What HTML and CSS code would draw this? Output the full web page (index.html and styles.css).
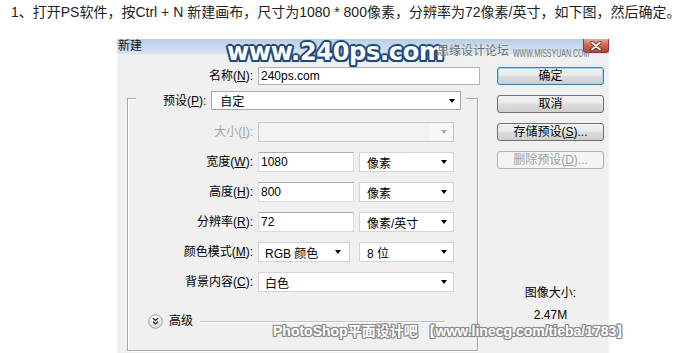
FILE: index.html
```html
<!DOCTYPE html>
<html lang="zh-CN">
<head>
<meta charset="utf-8">
<title>新建</title>
<link rel="stylesheet" href="styles.css">
</head>
<body>
<p class="intro">1、打开PS软件，按Ctrl + N 新建画布，尺寸为1080 * 800像素，分辨率为72像素/英寸，如下图，然后确定。</p>
<div class="stage">
  <div class="dialog">
    <div class="titlebar">
      <span class="title">新建</span>
      <span class="close"><svg width="14" height="10" viewBox="0 0 14 10"><path d="M3 1.5l8 7M11 1.5l-8 7" stroke="#5a1f1a" stroke-width="3.2" stroke-linecap="round"/><path d="M3 1.5l8 7M11 1.5l-8 7" stroke="#fff" stroke-width="1.8" stroke-linecap="round"/></svg></span>
    </div>
    <div class="body">
      <div class="main">
        <div class="name-row">
          <span class="lbl">名称(<u>N</u>):</span>
          <span class="input name">240ps.com</span>
        </div>
        <div class="group">
          <div class="group-head">
            <span class="lbl">预设(<u>P</u>):</span>
            <span class="select preset">自定</span>
          </div>
          <div class="grid-row first">
            <span class="lbl disabled">大小(<u>I</u>):</span>
            <span class="select span2 off"></span>
          </div>
          <div class="grid-row">
            <span class="lbl">宽度(<u>W</u>):</span>
            <span class="input">1080</span>
            <span class="select">像素</span>
          </div>
          <div class="grid-row">
            <span class="lbl">高度(<u>H</u>):</span>
            <span class="input">800</span>
            <span class="select">像素</span>
          </div>
          <div class="grid-row">
            <span class="lbl">分辨率(<u>R</u>):</span>
            <span class="input">72</span>
            <span class="select">像素/英寸</span>
          </div>
          <div class="grid-row">
            <span class="lbl">颜色模式(<u>M</u>):</span>
            <span class="select mode">RGB 颜色</span>
            <span class="select">8 位</span>
          </div>
          <div class="grid-row">
            <span class="lbl">背景内容(<u>C</u>):</span>
            <span class="select span2">白色</span>
          </div>
          <div class="advanced">
            <svg width="15" height="15" viewBox="0 0 15 15"><defs><linearGradient id="adv" x1="0" y1="0" x2="0" y2="1"><stop offset="0" stop-color="#ffffff"/><stop offset="1" stop-color="#d6d6d6"/></linearGradient></defs><circle cx="7.5" cy="7.5" r="6.8" fill="url(#adv)" stroke="#a0a0a0"/><path d="M5 4.3l2.5 2.1 2.5-2.1M5 7.8l2.5 2.1 2.5-2.1" fill="none" stroke="#222" stroke-width="1.3"/></svg>
            <span class="adv-text">高级</span>
            <span class="adv-line"></span>
          </div>
        </div>
      </div>
      <div class="side">
        <span class="btn default">确定</span>
        <span class="btn">取消</span>
        <span class="btn">存储预设(<u>S</u>)...</span>
        <span class="btn disabled">删除预设(<u>D</u>)...</span>
        <div class="info">图像大小:<br>2.47M</div>
      </div>
    </div>
  </div>
  <span class="wm wm-240">www.240ps.com</span>
  <span class="wm wm-cn">思缘设计论坛</span>
  <span class="wm wm-en">WWW.MISSYUAN.COM</span>
  <span class="wm wm-linecg">PhotoShop平面设计吧 【www.linecg.com/tieba/1783】</span>
</div>
</body>
</html>
```
FILE: styles.css
```css
html, body {
  margin: 0;
  padding: 0;
  background: #fff;
  overflow: hidden;
}
body {
  width: 682px;
  height: 353px;
  font-family: "Liberation Sans", "Noto Sans CJK SC", sans-serif;
}
.intro {
  margin: 0;
  padding: 4px 0 0 11px;
  font-size: 14px;
  line-height: 16px;
  color: #222;
  white-space: nowrap;
}
.stage {
  position: relative;
  margin: 19px 0 0 117px;
  width: 492px;
}
.dialog {
  width: 492px;
  height: 316px;
  background: #f0f0f0;
  font-size: 12px;
  color: #000;
}
.titlebar {
  height: 15px;
  border-bottom: 1px solid #f3eeee;
  display: flex;
  justify-content: space-between;
  align-items: flex-start;
  background: linear-gradient(#b8cee7, #d9e5f2);
}
.title {
  padding-left: 1px;
  line-height: 15px;
  font-size: 12px;
  color: #111;
}
.close {
  width: 24px;
  height: 13px;
  border: 1px solid #8a3a32;
  border-top: none;
  border-radius: 0 0 3px 3px;
  background: linear-gradient(#e8a395, #d0604f 50%, #c0402f);
  display: flex;
  align-items: center;
  justify-content: center;
}
.body {
  display: flex;
  padding-top: 12px;
}
.main {
  width: 363px;
  display: flex;
  flex-direction: column;
}
.lbl {
  text-align: right;
  white-space: nowrap;
  line-height: 16px;
}
.lbl.disabled {
  color: #a3a3a3;
}
.name-row {
  display: grid;
  grid-template-columns: 136px 222px;
  column-gap: 5px;
  align-items: center;
  height: 18px;
}
.input {
  box-sizing: border-box;
  height: 20px;
  background: #fff;
  border: 1px solid #d9dde3;
  border-top-color: #abadb3;
  padding-left: 2px;
  line-height: 18px;
  white-space: nowrap;
}
.input.name {
  height: 18px;
  line-height: 16px;
  border-color: #b5b5b5;
}
.select {
  box-sizing: border-box;
  height: 20px;
  background: #fff;
  border: 1px solid #d4d4d4;
  padding: 0 6px 0 7px;
  display: flex;
  justify-content: space-between;
  align-items: center;
  white-space: nowrap;
}
.select::after {
  content: "";
  border-left: 3.5px solid transparent;
  border-right: 3.5px solid transparent;
  border-top: 4px solid #000;
}
.select.off {
  background: linear-gradient(to right, #f3f3f3 88%, #f7f7f7 88%);
  border-color: #c6c6c6;
}
.select.off::after {
  border-top-color: #a8a8a8;
  margin-left: auto;
}
.select.preset {
  width: 250px;
  height: 19px;
  padding: 0 5px 0 8px;
  border-color: #a9a9a9;
}
.select.mode {
  width: 92px;
  padding: 0 8px 0 6px;
}
.select.span2 {
  grid-column: 2 / span 2;
  padding-left: 6px;
}
.group {
  box-sizing: border-box;
  margin: 13px 0 0 10px;
  width: 351px;
  height: 253px;
  border: 1px solid #a7a7a7;
  box-shadow: inset 1px 1px 0 #fff, 1px 1px 0 #fff;
  display: flex;
  flex-direction: column;
}
.group-head {
  align-self: flex-start;
  margin: -8px 0 0 8px;
  padding: 0 5px 0 27px;
  height: 19px;
  display: flex;
  align-items: center;
  gap: 5px;
  background: #f0f0f0;
}
.grid-row {
  display: grid;
  grid-template-columns: 125px 96px 95px;
  column-gap: 5px;
  align-items: center;
  height: 20px;
  margin-top: 10px;
}
.grid-row.first {
  margin-top: 12px;
}
.advanced {
  display: flex;
  align-items: center;
  height: 16px;
  margin-top: 21px;
  padding-left: 20px;
}
.adv-text {
  margin-left: 6px;
  line-height: 16px;
}
.adv-line {
  margin-left: 7px;
  width: 245px;
  height: 1px;
  background: #c2c2c2;
  box-shadow: 0 1px 0 #fff;
}
.side {
  margin-left: 17px;
  width: 107px;
  display: flex;
  flex-direction: column;
  gap: 10px;
}
.btn {
  box-sizing: border-box;
  height: 18px;
  border: 1px solid #707070;
  border-radius: 3px;
  background: linear-gradient(#f2f2f2 0%, #ebebeb 45%, #dddddd 50%, #cfcfcf 100%);
  text-align: center;
  line-height: 16px;
  white-space: nowrap;
}
.btn.default {
  border-color: #3c7fb1;
  box-shadow: inset 0 0 0 1px #9ad8f5;
}
.btn.disabled {
  color: #a0a0a0;
  border-color: #adb2b5;
  background: #f4f4f4;
}
.info {
  margin-top: 103px;
  text-align: center;
  line-height: 22px;
}
.wm {
  position: absolute;
  white-space: nowrap;
}
.wm-240 {
  left: 110px;
  top: 1px;
  font-family: "DejaVu Sans", sans-serif;
  font-weight: bold;
  font-size: 24px;
  line-height: 24px;
  color: #fff;
  letter-spacing: -0.3px;
  text-shadow:
    2px 0 0 #1f4a7e, -2px 0 0 #1f4a7e, 0 2px 0 #1f4a7e, 0 -2px 0 #1f4a7e,
    1.5px 1.5px 0 #1f4a7e, -1.5px -1.5px 0 #1f4a7e, 1.5px -1.5px 0 #1f4a7e, -1.5px 1.5px 0 #1f4a7e,
    0 0 3px #2a5a94;
}
.wm-cn {
  left: 320px;
  top: 6px;
  font-size: 12px;
  line-height: 12px;
  color: #6b6b6b;
  text-shadow: 0 0 2px #fff;
}
.wm-en {
  left: 396px;
  top: 10px;
  font-size: 10px;
  line-height: 10px;
  color: #777;
  transform: scaleX(0.7);
  transform-origin: left top;
}
.wm-linecg {
  left: 156px;
  top: 285px;
  font-weight: bold;
  font-size: 14px;
  line-height: 14px;
  color: #fff;
  text-shadow:
    1px 0 0 #8c8c8c, -1px 0 0 #8c8c8c, 0 1px 0 #8c8c8c, 0 -1px 0 #8c8c8c,
    1px 1px 0 #8c8c8c, -1px -1px 0 #8c8c8c, 1px -1px 0 #8c8c8c, -1px 1px 0 #8c8c8c,
    0 0 2px #777;
}
```
